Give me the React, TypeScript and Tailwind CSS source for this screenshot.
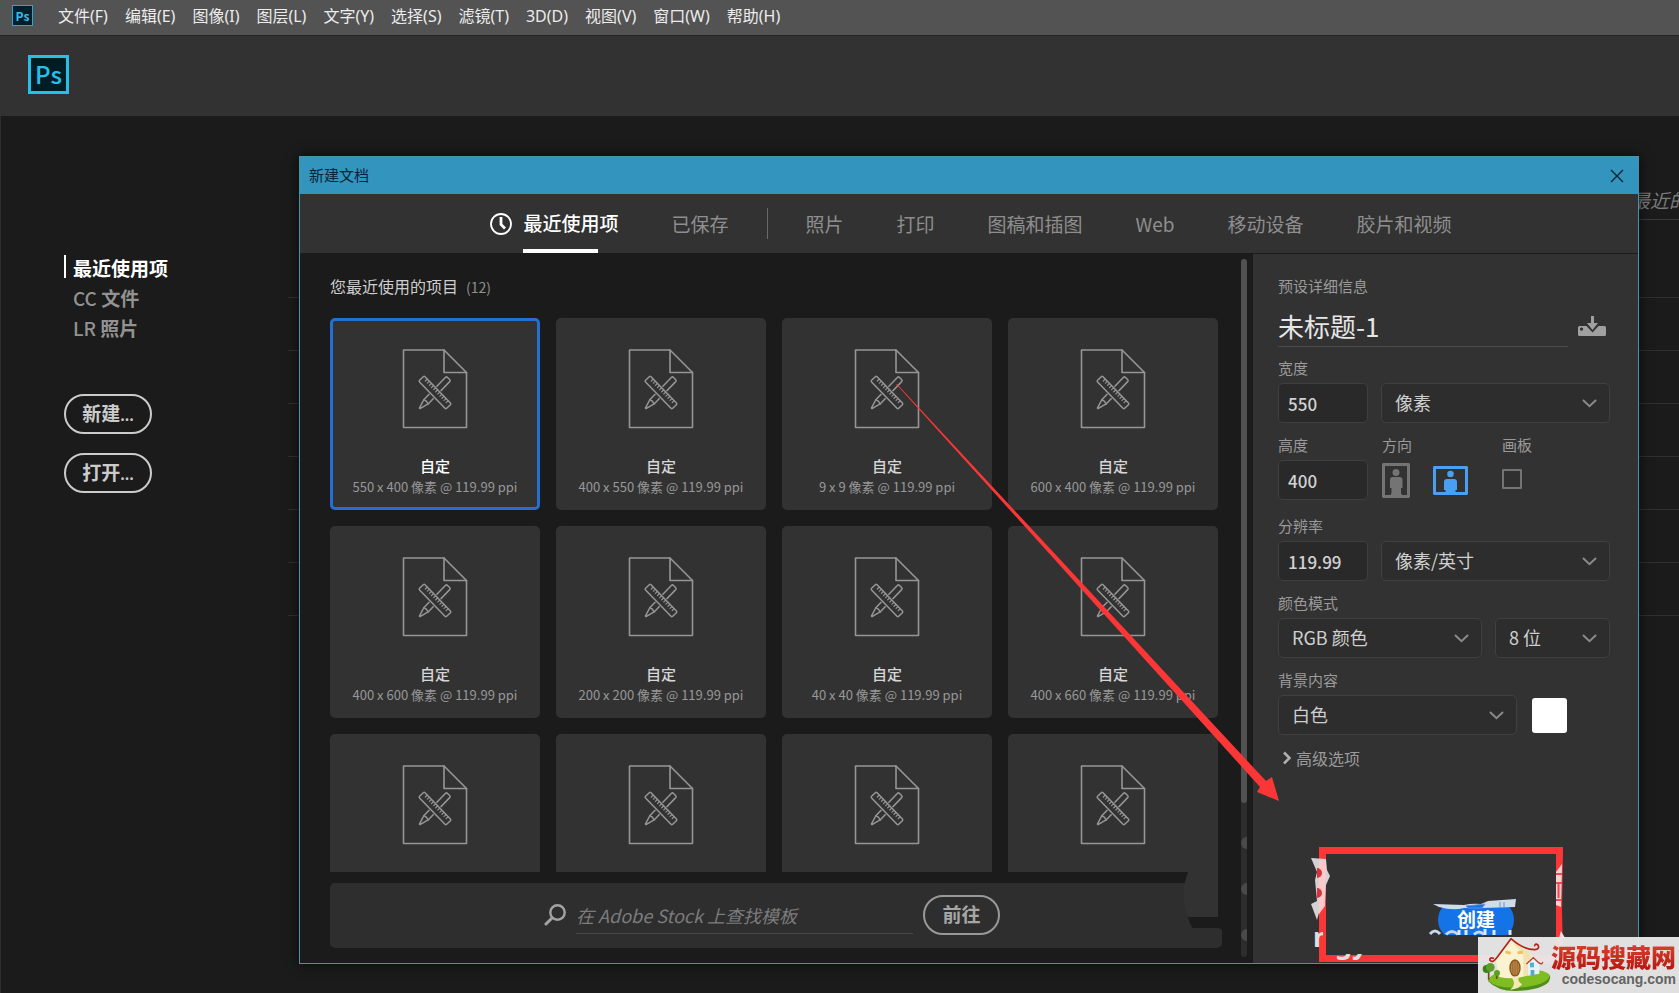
import React from "react";

const menus = ["文件(F)", "编辑(E)", "图像(I)", "图层(L)", "文字(Y)", "选择(S)", "滤镜(T)", "3D(D)", "视图(V)", "窗口(W)", "帮助(H)"];

const presets = [
  "550 x 400 像素 @ 119.99 ppi",
  "400 x 550 像素 @ 119.99 ppi",
  "9 x 9 像素 @ 119.99 ppi",
  "600 x 400 像素 @ 119.99 ppi",
  "400 x 600 像素 @ 119.99 ppi",
  "200 x 200 像素 @ 119.99 ppi",
  "40 x 40 像素 @ 119.99 ppi",
  "400 x 660 像素 @ 119.99 ppi",
];

const ticks = [-15, -12, -9, -6, -3, 0, 3, 6, 9, 12, 15];

function DocumentIcon() {
  return (
    <svg width="66" height="80" viewBox="0 0 66 80" fill="none" stroke="#969696" strokeWidth="1.6" strokeLinejoin="round" strokeLinecap="round" aria-hidden="true">
      <path d="M1.5 1H42L64.500 23.500V78.500H1.500Z" />
      <path d="M42 1V23.500H64.500" />
      <g transform="translate(33 43.500) rotate(-46)" strokeWidth="1.500">
        <path d="M-13 -3H18A1.500 1.500 0 0 1 19.500 -1.500V1.500A1.500 1.500 0 0 1 18 3H-13L-22 0.400V-0.400Z" />
        <path d="M-13 -3Q-11.500 0 -13 3" />
      </g>
      <g transform="translate(33 43.500) rotate(46)" strokeWidth="1.500">
        <rect x="-19" y="-5" width="38" height="10" fill="#323232" stroke="none" />
        <rect x="-19.500" y="-3.800" width="39" height="7.600" rx="1.200" fill="#323232" />
        {ticks.map((t) => (
          <path key={t} d={`M${t} -3.600V-1`} strokeWidth="1.200" />
        ))}
      </g>
    </svg>
  );
}

function PresetCard({ label, selected }: { label?: string; selected?: boolean }) {
  return (
    <button
      className={
        selected
          ? "flex h-48 min-w-0 flex-col items-center rounded-[5px] border-[3px] border-[#2470d2] bg-[#323232] pt-7 text-white"
          : "flex h-48 min-w-0 flex-col items-center rounded-[5px] border-[3px] border-[#323232] bg-[#323232] pt-7 text-[#d6d6d6]"
      }
    >
      <DocumentIcon />
      {label && (
        <>
          <span className="mt-[26px] text-[15px] leading-[22px] font-medium">自定</span>
          <span className="whitespace-nowrap text-[13px] leading-5 text-[#989898]">{label}</span>
        </>
      )}
    </button>
  );
}

function Chevron() {
  return (
    <svg className="pointer-events-none absolute right-[13px] top-4" width="15" height="9" viewBox="0 0 15 9" fill="none" stroke="#8a8a8a" strokeWidth="2" aria-hidden="true">
      <path d="M1.500 1.500L7.500 7.200L13.500 1.500" strokeLinecap="round" />
    </svg>
  );
}

function Select({ id, label, value, className }: { id: string; label: string; value: string; className: string }) {
  return (
    <div className={className}>
      <select id={id} aria-label={label} className="h-10 w-full appearance-none rounded-[5px] border border-[#404040] bg-[#2d2d2d] pb-0.5 pl-[13px] text-[18px] leading-6 text-[#cfcfcf]">
        <option>{value}</option>
      </select>
      <Chevron />
    </div>
  );
}

function NumberBox({ id, value }: { id: string; value: string }) {
  return (
    <input id={id} defaultValue={value} className="h-10 w-[90px] shrink-0 rounded-[5px] border border-[#3f3f3f] bg-[#292929] pl-[9px] text-[17px] font-medium text-[#d2d2d2]" />
  );
}

const labelClass = "block text-[15px] leading-5 text-[#9a9a9a]";

function RedFrame() {
  return (
    <div className="relative mb-px ml-[41px] mt-auto h-[115px] w-[244px] shrink-0 border-[7px] border-[#fa3637] pl-28 pt-[51px]">
      <div className="flex h-[30px] items-center overflow-hidden">
        <button className="h-10 w-[76px] shrink-0 rounded-full bg-[#1473e6] pb-0.5 text-[19px] font-bold text-white">创建</button>
      </div>
      <svg className="pointer-events-none absolute -left-[17px] -top-[7px]" width="268" height="115" viewBox="1309 847 268 115" aria-hidden="true">
        <defs>
          <clipPath id="clip-left"><rect x="1311" y="929" width="12" height="18" /></clipPath>
          <clipPath id="clip-bottom"><rect x="1334" y="954" width="36" height="8" /></clipPath>
        </defs>
        <path d="M1311 858L1326 859L1327 870L1330 876L1326 885L1325 903L1319 913L1317 920L1311 904L1317 901L1315 880L1317 872Z" fill="#d3d1d3" />
        <path d="M1319 860L1326 861V872L1325 886V906L1319 914Z" fill="#ffc9cc" />
        <path d="M1317 868A5 5 0 0 1 1317 878ZM1317 888A5 5 0 0 1 1317 898Z" fill="#d9333a" />
        <path d="M1563 854L1562 910L1563 961L1567 961V847H1563Z" fill="#323232" />
        <path d="M1556 872L1562 864L1561 907L1556 905Z" fill="#ffd0d3" />
        <path d="M1556 874H1562M1556 883H1562M1556 900H1562M1558.500 884V898" stroke="#ee4750" strokeWidth="2" />
        <path d="M1561 931L1565 938H1559Z" fill="#f4dfe0" />
        <path d="M1433 904L1464 905Q1472 903 1481 904L1488 901L1516 899L1515 907L1482 908H1464Q1453 911 1439 907Z" fill="#cfdcea" />
        <path d="M1466 906L1485 904L1482 908H1468ZM1500 902V907M1504 902V907" fill="#1473e6" stroke="#6a94c9" />
        <path d="M1430 934Q1435 928 1440 934M1446 934.500Q1452 928.500 1458 934.500M1474 934.500Q1479 929.500 1484 934.500" fill="none" stroke="#c4d8f0" strokeWidth="3" />
        <path d="M1459 930V935M1466 930V935M1485 929V935M1494 930V935M1510 930V935" stroke="#dce8f6" strokeWidth="3" />
        <g fill="#dedede" fontFamily="Noto Sans" fontWeight="700" fontSize="27">
          <text x="1313" y="947" clipPath="url(#clip-left)">n</text>
          <text x="1335" y="954" clipPath="url(#clip-bottom)">gy</text>
        </g>
      </svg>
    </div>
  );
}

function DetailsPanel() {
  return (
    <aside className="mt-px flex w-[385px] shrink-0 flex-col bg-[#323232] pl-[25px] pr-7 pt-[22px]">
      <h2 className={labelClass}>预设详细信息</h2>
      <div className="mt-[9px] flex items-center gap-[9px]">
        <input aria-label="名称" defaultValue="未标题-1" className="h-[42px] w-[290px] border-b border-[#4b4b4b] bg-transparent text-[26px] text-[#e6e6e6]" />
        <button aria-label="保存预设">
          <svg width="30" height="22" viewBox="0 0 30 22" aria-hidden="true">
            <path fillRule="evenodd" d="M2.500 11H9.500L15.500 17.500L21.500 11H27.500A1.500 1.500 0 0 1 29 12.500V19.500A1.500 1.500 0 0 1 27.500 21H2.500A1.500 1.500 0 0 1 1 19.500V12.500A1.500 1.500 0 0 1 2.500 11ZM4.500 12.500A1.600 1.600 0 1 0 4.600 12.500Z" fill="#a0a0a0" />
            <path d="M14 1H17V8H21L15.500 15L10 8H14Z" fill="#a0a0a0" />
          </svg>
        </button>
      </div>

      <label htmlFor="width" className={"mt-[11px] " + labelClass}>宽度</label>
      <div className="mt-[5px] flex gap-[13px]">
        <NumberBox id="width" value="550" />
        <Select id="unit" label="单位" value="像素" className="relative flex-1" />
      </div>

      <div className="mt-3 flex">
        <div className="w-[104px]">
          <label htmlFor="height" className={labelClass}>高度</label>
          <div className="mt-[5px] flex"><NumberBox id="height" value="400" /></div>
        </div>
        <div className="w-[120px]">
          <span className={labelClass}>方向</span>
          <div className="mt-[5px] flex h-10 items-center gap-[23px]">
            <button aria-label="纵向">
              <svg width="28" height="35" viewBox="0 0 28 35" fill="#747474" aria-hidden="true">
                <path fillRule="evenodd" d="M1 0H27L28 1V34L27 35H1L0 34V1ZM3 3V32H25V3Z" />
                <circle cx="14" cy="9.500" r="3.500" />
                <path d="M10.500 14H17.500Q20.500 14 20.500 17V25H19V30L20 32H8.500L9.500 30V25H8V17Q8 14 10.500 14Z" />
              </svg>
            </button>
            <button aria-label="横向">
              <svg width="35" height="29" viewBox="0 0 35 29" fill="#4a9ff0" aria-hidden="true">
                <path fillRule="evenodd" d="M1 0H34L35 1V28L34 29H1L0 28V1ZM3 3V26H32V3Z" />
                <circle cx="17.500" cy="8" r="3.300" />
                <path d="M14 13H21Q24 13 24 16V24H22.500V27H12.500V24H11V16Q11 13 14 13Z" />
              </svg>
            </button>
          </div>
        </div>
        <div>
          <label htmlFor="artboard" className={labelClass}>画板</label>
          <div className="mt-[5px] flex h-10 items-center pb-0.5">
            <input id="artboard" type="checkbox" className="size-5 appearance-none rounded-[1px] border-2 border-[#747474] bg-[#303030]" />
          </div>
        </div>
      </div>

      <label htmlFor="resolution" className={"mt-4 " + labelClass}>分辨率</label>
      <div className="mt-[5px] flex gap-[13px]">
        <NumberBox id="resolution" value="119.99" />
        <Select id="resolution-unit" label="分辨率单位" value="像素/英寸" className="relative flex-1" />
      </div>

      <label htmlFor="mode" className={"mt-3 " + labelClass}>颜色模式</label>
      <div className="mt-[5px] flex gap-[13px]">
        <Select id="mode" label="颜色模式" value="RGB 颜色" className="relative flex-1" />
        <Select id="depth" label="位深度" value="8 位" className="relative w-[115px]" />
      </div>

      <label htmlFor="background" className={"mt-3 " + labelClass}>背景内容</label>
      <div className="mt-[5px] flex items-center gap-[15px]">
        <Select id="background" label="背景内容" value="白色" className="relative w-[239px]" />
        <button aria-label="背景颜色" className="size-[35px] rounded-[3px] bg-white" />
      </div>

      <button className="mt-[11px] flex items-center gap-1 self-start pl-1 text-[16px] leading-6 text-[#9a9a9a]">
        <svg width="10" height="14" viewBox="0 0 10 14" fill="none" stroke="#b0b0b0" strokeWidth="2.500" aria-hidden="true">
          <path d="M2 1.500L7.500 7L2 12.500" />
        </svg>
        高级选项
      </button>
      <RedFrame />
    </aside>
  );
}

function ScrollBar() {
  return (
    <div className="flex w-1.5 shrink-0 flex-col rounded-full bg-[#2d2d2d]">
      <div className="flex-1 rounded-full bg-[#525252]" />
      <div className="flex h-[22%] flex-col gap-[34px] pt-[34px]">
        <div className="h-3 rounded-l-full bg-[#4a4a4a]" />
        <div className="h-3 rounded-l-full bg-[#4a4a4a]" />
        <div className="h-3 rounded-l-full bg-[#4a4a4a]" />
      </div>
    </div>
  );
}

function PresetsPanel() {
  return (
    <section className="flex min-w-0 flex-1 bg-[#1b1b1b] pb-[6px] pl-[30px] pr-1.5 pt-1.5">
      <div className="flex min-w-0 flex-1 flex-col pb-[9px] pr-[19px]">
        <h2 className="pt-[15px] text-[16px] leading-6 text-[#cdcdcd]">
          您最近使用的项目<span className="ml-2 text-[14px] text-[#8f8f8f]">(12)</span>
        </h2>
        <div className="mr-1 mt-[19px] grid min-h-0 flex-1 grid-cols-4 content-start gap-4 overflow-hidden">
          {presets.map((p, i) => (
            <PresetCard key={p} label={p} selected={i === 0} />
          ))}
          <PresetCard />
          <PresetCard />
          <PresetCard />
          <PresetCard />
        </div>
        <div className="relative mt-[11px] flex h-[65px] shrink-0 items-center justify-center rounded-[5px] bg-[#2e2e2e] pb-0.5 pr-2">
          <svg width="24" height="24" viewBox="0 0 24 24" fill="none" stroke="#a3a3a3" strokeWidth="2.400" strokeLinecap="round" aria-hidden="true">
            <circle cx="13.500" cy="9.500" r="7.200" />
            <path d="M8 15L2 21" strokeWidth="3" />
          </svg>
          <input aria-label="查找模板" placeholder="在 Adobe Stock 上查找模板" className="ml-2 mt-0.5 h-9 w-[337px] border-b border-[#474747] bg-transparent text-[18px] italic placeholder:text-[#7c7c7c]" />
          <button className="ml-2.5 h-10 w-[77px] rounded-full border-2 border-[#999999] text-[19px] font-bold text-[#a6a6a6]">前往</button>
          <svg className="pointer-events-none absolute -top-[11px] right-0" width="42" height="76" viewBox="1180 872 42 76" aria-hidden="true">
            <path d="M1188 872H1222V928H1194L1188 917Z" fill="#1b1b1b" />
            <path d="M1188 872H1218V917H1188Q1182 905 1184 885Z" fill="#323232" />
            <path d="M1188 917H1222V930H1194Q1190 925 1188 917Z" fill="#1b1b1b" />
            <path d="M1193 928H1217Q1222 928 1222 933V940H1193Z" fill="#2e2e2e" />
          </svg>
        </div>
      </div>
      <ScrollBar />
    </section>
  );
}

const tabClass = "text-[19px] leading-7 text-[#8e8e8e]";

function NewDocumentDialog() {
  return (
    <div role="dialog" aria-label="新建文档" className="absolute bottom-[29px] left-[299px] right-10 top-[156px] flex flex-col border border-[#4a92a8] bg-[#323232] shadow-[0_0_12px_rgba(0,0,0,0.7)]">
      <header className="flex h-[37px] shrink-0 items-center justify-between bg-[#3394bd] pl-[9px] pr-3.5 text-[15px] text-[#062536]">
        <span>新建文档</span>
        <button aria-label="关闭">
          <svg width="14" height="14" viewBox="0 0 14 14" stroke="#06202e" strokeWidth="1.300" aria-hidden="true">
            <path d="M1 1L13 13M13 1L1 13" />
          </svg>
        </button>
      </header>
      <nav className="flex h-[59px] shrink-0 items-center justify-center gap-[53px] pl-1">
        <button className="relative flex h-full items-center gap-[11px] text-[19px] font-medium text-white">
          <svg width="22" height="22" viewBox="0 0 22 22" fill="none" stroke="currentColor" strokeWidth="1.800" aria-hidden="true">
            <circle cx="11" cy="11" r="10" />
            <path d="M11 4V11.500L15 15.500" strokeWidth="2.800" />
          </svg>
          最近使用项
          <span className="absolute bottom-0 left-[33px] h-1 w-[75px] bg-white" />
        </button>
        <div className="flex items-center gap-[38px]">
          <button className={tabClass}>已保存</button>
          <span className="h-[31px] w-px bg-[#6a6a6a]" />
          <button className={tabClass}>照片</button>
        </div>
        <button className={tabClass}>打印</button>
        <button className={tabClass}>图稿和插图</button>
        <button className={tabClass}>Web</button>
        <button className={tabClass}>移动设备</button>
        <button className={tabClass}>胶片和视频</button>
      </nav>
      <div className="flex min-h-0 flex-1 bg-[#1b1b1b]">
        <PresetsPanel />
        <DetailsPanel />
      </div>
    </div>
  );
}

function SiteBadge() {
  return (
    <div className="absolute bottom-0 right-0 flex h-14 w-[201px] bg-[#ebebeb]/95">
      <svg className="shrink-0" width="73" height="56" viewBox="54 320 219 168" aria-hidden="true">
        <path d="M84 452Q96 424 150 424Q250 412 270 436Q276 468 205 479Q120 492 84 452Z" fill="#4f8f17" />
        <path d="M84 450Q98 422 150 422Q250 410 269 434Q268 460 198 470Q112 480 84 450Z" fill="#7fbd22" />
        <path d="M106 386L153 332L212 366V432Q165 450 118 440Z" fill="#fbf3cf" />
        <path d="M153 334L212 366V432L190 438V372Z" fill="#f1e2b4" />
        <ellipse cx="165" cy="413" rx="17" ry="26" fill="#8a5320" />
        <ellipse cx="165" cy="413" rx="13" ry="22" fill="#b98343" />
        <path d="M165 392V436M158 394V432M172 394V432" stroke="#8a5320" strokeWidth="1.500" />
        <path d="M154 440L178 438Q170 452 186 462Q178 476 150 478Q172 464 154 440Z" fill="#f6e8b8" />
        <rect x="136" y="362" width="17" height="9" rx="3" fill="#f2bd63" transform="rotate(12 144 366)" />
        <rect x="172" y="362" width="17" height="9" rx="3" fill="#f2bd63" transform="rotate(-8 180 366)" />
        <path d="M204 398L220 384L238 398V430L204 436Z" fill="#e3f3f7" />
        <rect x="210" y="397" width="12" height="14" fill="#4fb3d2" />
        <rect x="212" y="419" width="11" height="16" fill="#5aa6c4" />
        <path d="M200 400L220 382L236 397Q246 404 248 396" fill="none" stroke="#c8402c" strokeWidth="4" strokeLinecap="round" />
        <path d="M100 384Q88 380 90 390Q98 400 112 380L153 325Q190 358 224 358Q240 356 234 344Q226 338 224 346" fill="none" stroke="#b3231a" strokeWidth="5" strokeLinecap="round" strokeLinejoin="round" />
        <path d="M86 424V448M110 432V446" stroke="#6d4a20" strokeWidth="5" />
        <circle cx="80" cy="416" r="12" fill="#3f7f1a" />
        <circle cx="91" cy="411" r="13" fill="#5c9f24" />
        <circle cx="111" cy="428" r="9" fill="#5c9f24" />
      </svg>
      <div className="flex flex-1 flex-col items-end pr-1 pt-1">
        <span className="whitespace-nowrap bg-gradient-to-b from-[#e04430] to-[#b5120e] bg-clip-text text-[25px] font-black leading-[30px] text-transparent">源码搜藏网</span>
        <span className="font-['Liberation_Sans',sans-serif] text-[14px] font-bold leading-4 text-[#636363]">codesocang.com</span>
      </div>
    </div>
  );
}

const rows = [0, 1, 2, 3, 4, 5, 6];
const roundButton = "h-10 w-[88px] rounded-full border-2 border-[#cbcbcb] pb-0.5 text-[19px] font-bold text-[#cbcbcb]";

export default function App() {
  return (
    <div className="relative flex h-screen min-h-[900px] flex-col overflow-hidden bg-[#1b1b1b] font-['Noto_Sans_CJK_SC',sans-serif]">
      <header className="flex h-[35px] shrink-0 items-center bg-[#535353] pl-3 font-['Noto_Sans','Noto_Sans_CJK_SC',sans-serif]">
        <div className="mb-1 flex size-[21px] items-center justify-center border border-[#2aa7d0] bg-[#001e2c] font-['Noto_Sans_CJK_SC',sans-serif] text-[12px] font-bold leading-4 text-[#38bfe8]">Ps</div>
        <nav className="mb-1 ml-[25px] flex gap-[17px] text-[16px] leading-6 text-[#ececec]">
          {menus.map((m) => (
            <button key={m} className="whitespace-nowrap">{m}</button>
          ))}
        </nav>
      </header>
      <div className="flex h-[81px] shrink-0 items-center border-t border-[#252525] bg-[#323232] pl-7">
        <div className="mb-[3px] flex h-[39px] w-[41px] items-center justify-center border-[3px] border-[#26bfe6] bg-[#001d26] pb-0.5 text-[24px] font-medium leading-8 text-[#29bfe8]">Ps</div>
      </div>
      <main className="flex flex-1">
        <aside className="w-[288px] shrink-0 border-l border-[#2e2e2e] pl-[63px] pt-[137px]">
          <nav className="flex flex-col items-start text-[19px] font-bold leading-[30px] text-[#929292]">
            <a href="#recent" className="flex items-center gap-[7px] text-white">
              <span className="mb-1 h-[23px] w-0.5 bg-white" />
              最近使用项
            </a>
            <a href="#cc" className="pl-[9px]"><span className="font-medium">CC </span>文件</a>
            <a href="#lr" className="pl-[9px]"><span className="font-medium">LR </span>照片</a>
          </nav>
          <div className="mt-[51px] flex flex-col gap-[19px]">
            <button className={roundButton}>新建<span className="text-[14px]">...</span></button>
            <button className={roundButton}>打开<span className="text-[14px]">...</span></button>
          </div>
        </aside>
        <section className="flex min-w-0 flex-1 flex-col pt-[68px]">
          <input aria-label="筛选" placeholder="最近的" className="h-9 w-12 self-end border-b border-[#3a3a3a] bg-transparent pb-1 text-[19px] italic placeholder:text-[#7c7c7c]" />
          <div className="mt-[77px]">
            {rows.map((r) => (
              <div key={r} className="h-[53px] border-t border-[#303030]" />
            ))}
          </div>
        </section>
      </main>
      <NewDocumentDialog />
      <svg className="pointer-events-none absolute left-0 top-0 size-full" aria-hidden="true">
        <path d="M896 384L897 384L1266 781L1272 777L1279 801L1257 792L1260 787Z" fill="#fa3637" />
      </svg>
      <SiteBadge />
    </div>
  );
}
